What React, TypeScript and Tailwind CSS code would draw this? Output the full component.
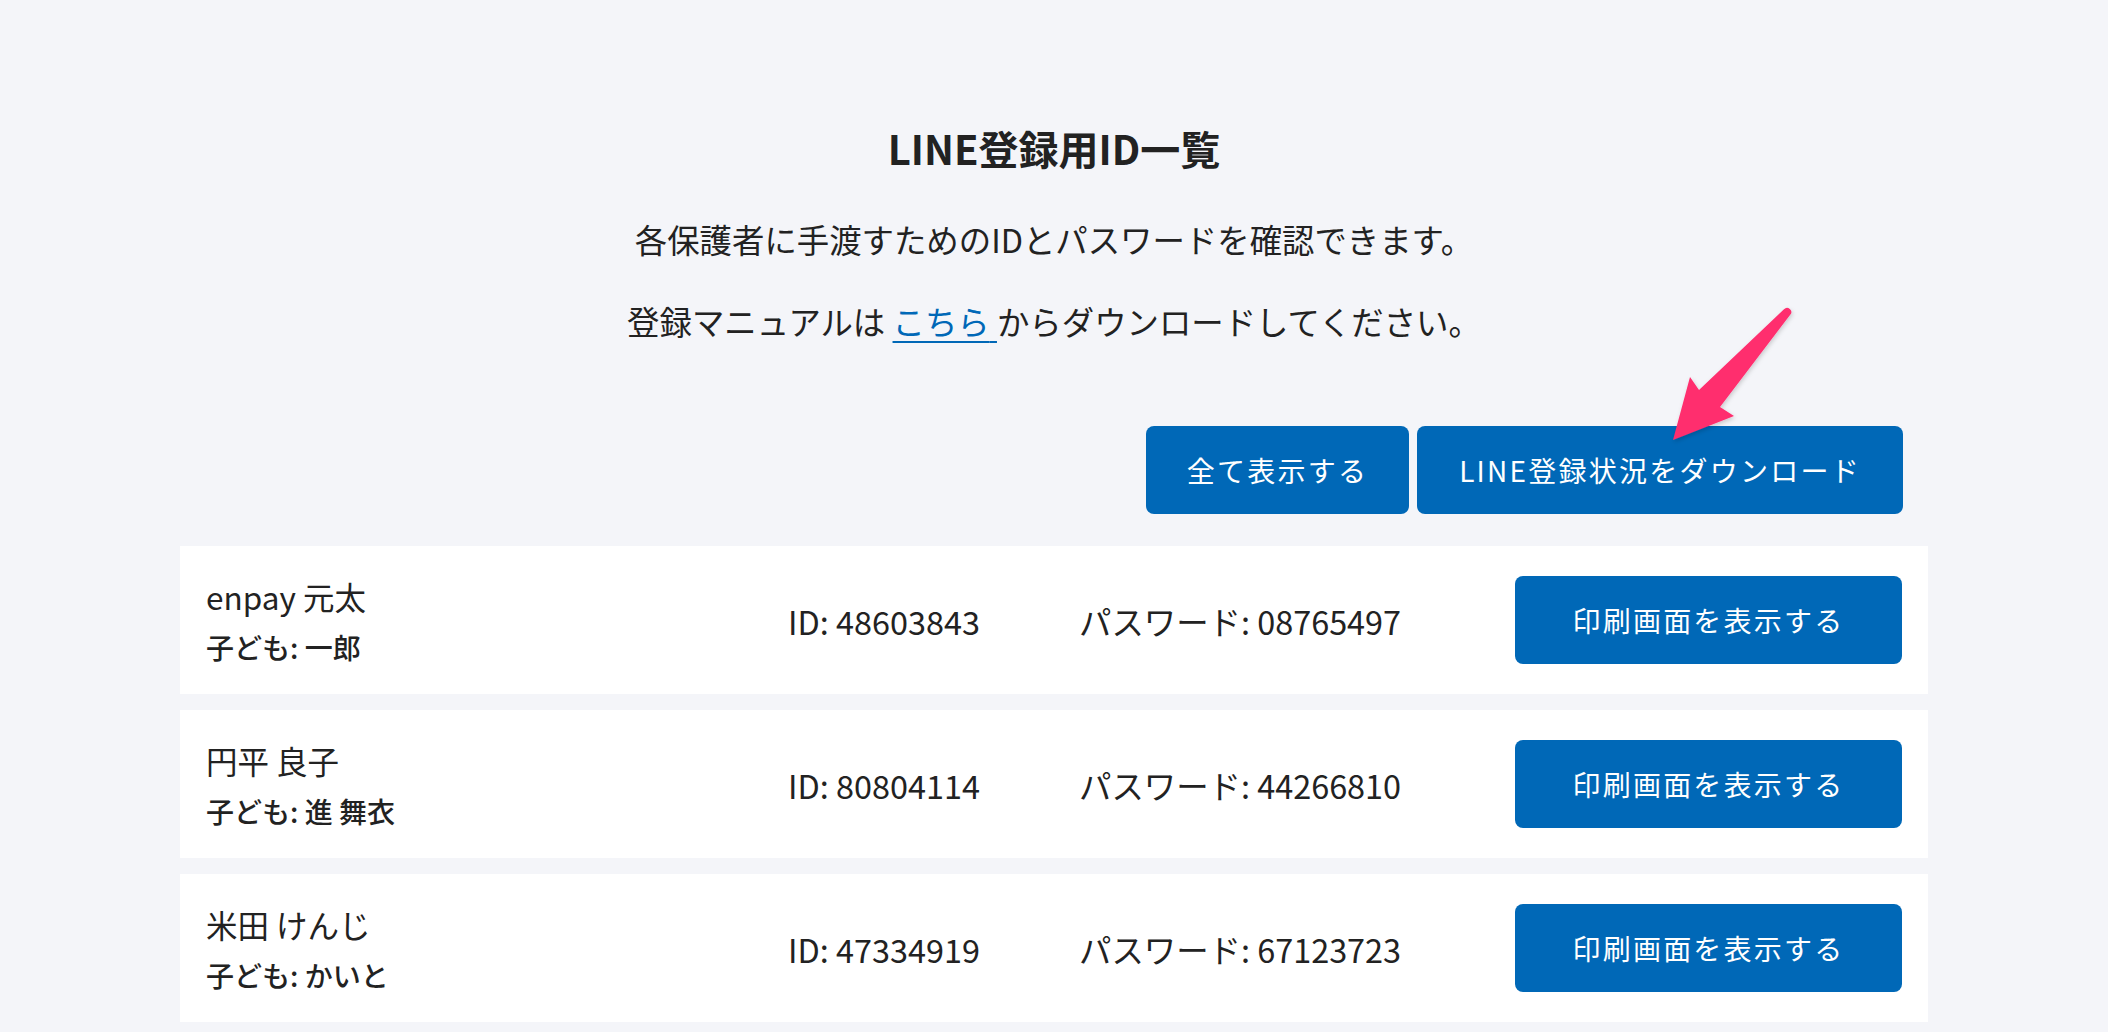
import React from "react";

const rows = [
  { name: "enpay 元太", child: "子ども: 一郎", id: "48603843", pw: "08765497" },
  { name: "円平 良子", child: "子ども: 進 舞衣", id: "80804114", pw: "44266810" },
  { name: "米田 けんじ", child: "子ども: かいと", id: "47334919", pw: "67123723" },
];

function Arrow() {
  return (
    <svg
      className="absolute left-[1640px] top-[290px] pointer-events-none"
      width="180"
      height="170"
      viewBox="0 0 180 170"
    >
      <defs>
        <filter id="sh" x="-20%" y="-20%" width="140%" height="140%">
          <feDropShadow dx="1" dy="2" stdDeviation="2" floodColor="#000" floodOpacity="0.18" />
        </filter>
      </defs>
      <path
        filter="url(#sh)"
        fill="#ff2d6e"
        d="M33 150 L50 87 L59 100 L144 19.3 A4 4 0 0 1 150.2 24.7 L80 117 L94 126 Z"
      />
    </svg>
  );
}

export default function App() {
  return (
    <div
      className="relative min-h-screen bg-[#f4f5f9] text-[#222]"
      style={{ fontFamily: '"Noto Sans CJK JP", "Noto Sans", sans-serif' }}
    >
      <div className="mx-auto w-[1748px] pt-[117px] pb-[12px]">
        <h1 className="text-center text-[40px] leading-[63px] font-bold">LINE登録用ID一覧</h1>
        <p className="mt-[35px] text-center text-[32.4px] leading-[47px]">
          各保護者に手渡すためのIDとパスワードを確認できます。
        </p>
        <p className="mt-[35px] text-center text-[32.4px] leading-[47px]">
          登録マニュアルは{" "}
          <a href="#" className="text-[#0068b7] underline decoration-2 underline-offset-[6px]">
            こちら{" "}
          </a>
          からダウンロードしてください。
        </p>
        <div className="mt-[82px] flex justify-end gap-[8px] pr-[25px]">
          <button className="h-[88px] w-[263px] rounded-[8px] bg-[#0068b7] text-[28px] tracking-[0.08em] text-white">
            全て表示する
          </button>
          <button className="h-[88px] w-[486px] rounded-[8px] bg-[#0068b7] text-[28px] tracking-[0.08em] text-white">
            LINE登録状況をダウンロード
          </button>
        </div>
        <div className="mt-[32px] flex flex-col gap-[16px]">
          {rows.map((r) => (
            <div key={r.id} className="flex h-[148px] items-center bg-white pl-[26px] pr-[26px]">
              <div className="flex flex-1 flex-col">
                <div className="text-[31.5px] leading-[47px]">{r.name}</div>
                <div className="mt-[6px] text-[28px] leading-[42px] font-medium">{r.child}</div>
              </div>
              <div className="w-[291px] text-[32.4px] leading-[47px]">ID: {r.id}</div>
              <div className="w-[436px] text-[32.4px] leading-[47px]">パスワード: {r.pw}</div>
              <button className="h-[88px] w-[387px] rounded-[8px] bg-[#0068b7] text-[28px] tracking-[0.08em] text-white">
                印刷画面を表示する
              </button>
            </div>
          ))}
        </div>
      </div>
      <Arrow />
    </div>
  );
}
